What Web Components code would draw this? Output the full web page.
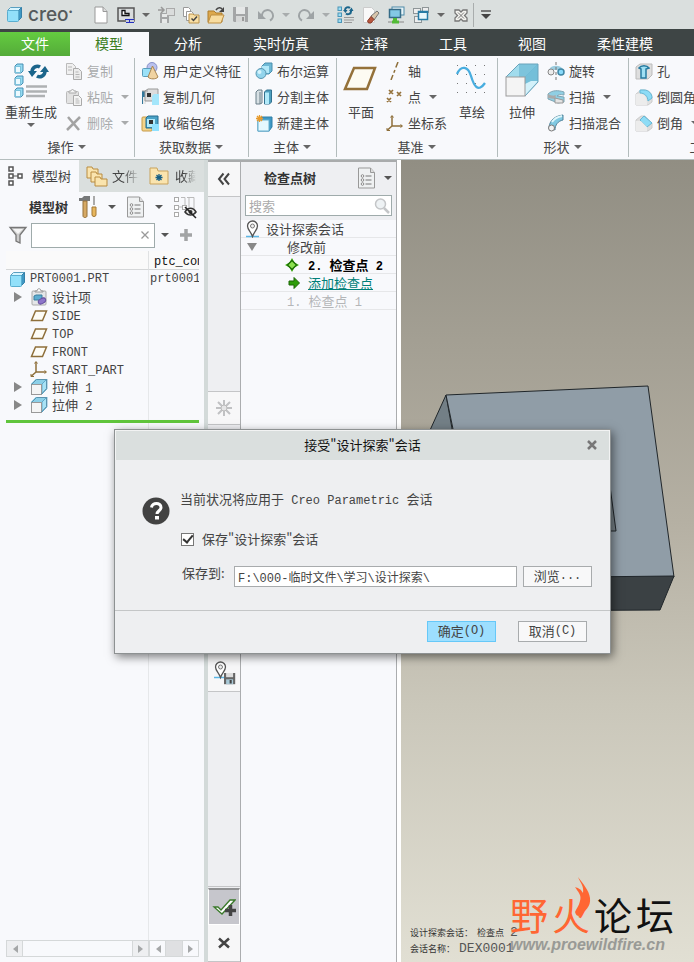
<!DOCTYPE html>
<html lang="zh-CN">
<head>
<meta charset="utf-8">
<title>Creo</title>
<style>
html, body { margin: 0; height: 100%; }
body { font: 13px/18px "Noto Sans CJK SC", sans-serif; color: #444; overflow: hidden; background: #f8f9fc; }
</style>
</head>
<body>
<creo-app></creo-app>
<script>
const CUBE = '<path d="M1.5 4.5 4.5 1.5h11l-3 3z" fill="#d8f5ff" stroke="#5a9fc0"/><path d="M12.5 4.5l3-3v10l-3 3z" fill="#3f98c4" stroke="#3580a8"/><rect x="1.500" y="4.500" width="11" height="11" rx="1" fill="#92e0fa" stroke="#5aaed0"/>';
const EXTRUDE = '<path d="M6 1h11v9l-5 6V6H1z" fill="#57aed2"/><path d="M6 1h11l-5 5H1z" fill="#8cd0e8"/><path d="M12 6l5-5v10l-5 5z" fill="#a8e2f5" stroke="#4c9abf" stroke-width=".7"/><rect x="1.500" y="6.500" width="10" height="10" fill="#f5f5f5" stroke="#999"/><path d="M1.500 6.500 6.500 1.500h10v9l-5 5.500" fill="none" stroke="#5b93ad"/>';
const PLANE = '<path d="M5.500 4h11l-4 9.500h-11z" fill="#fdfcf6" stroke="#8e6f3a" stroke-width="1.500"/>';
const AXES = '<path d="M6 2v10M6 12h10M6 12l-5 4.500" fill="none" stroke="#8e6f3a" stroke-width="1.500"/><path d="M4.500 3.500l1.500-2 1.500 2M14.500 10.500l2 1.500-2 1.500M1 14v2.500h3" fill="none" stroke="#8e6f3a"/>';
const LISTDOC = '<path d="M1.500 1h12l4 4.500V21h-16z" fill="#eff1f2" stroke="#999"/><path d="M13.500 1v4.500h4" fill="#ddd" stroke="#999"/><g fill="#fff" stroke="#888"><circle cx="5.500" cy="9" r="1.300"/><circle cx="5.500" cy="13" r="1.300"/><circle cx="5.500" cy="17" r="1.300"/></g><path d="M8.500 9h6M8.500 13h6M8.500 17h6" stroke="#777"/>';
const REGEN = '<g transform="translate(0 0) scale(.5)"><path d="M16 8a6 6 0 0 1 10-4M28 10a6 6 0 0 1-10 5" fill="none" stroke="#1b658b" stroke-width="4"/><path d="M12 8h9l-4 6zM24 10h9l-4-7z" fill="#1b658b"/></g>';
const FLOPPY = '<path d="M1 1h15v15H2l-1-1z" fill="#a4a6a7"/><path d="M4 1h9v7H4z" fill="#e5e7e7"/><path d="M4 10h9v6H4z" fill="#d6d8d8"/><path d="M10 11h2v4h-2z" fill="#999"/>';
const PIN = '<path d="M2 16.500h13" stroke="#5cb7e6" stroke-width="1.500"/><path d="M8.500 16.500C7 12 3.500 9.500 3.500 6a5 5 0 0 1 10 0c0 3.500-3.500 6-5 10.500z" fill="#fff" stroke="#555" stroke-width="1.300"/><circle cx="8.500" cy="6" r="2" fill="#eee" stroke="#777"/>';
const ICONS = {
  cube: [17, 17, CUBE],
  page: [18, 18, '<path d="M3 1h8l4 4.500V17H3z" fill="#fff" stroke="#999"/><path d="M11 1v4.500h4" fill="#ddd" stroke="#999"/>'],
  window: [18, 18, '<rect x="1" y="2" width="16" height="13" fill="#d9dcdd" stroke="#555" stroke-width="1.500"/><path d="M5 4.500v5h7v-2H8v-3z" fill="#fff" stroke="#111" stroke-width="1.300"/><path d="M9 12.500h8v4H9z" fill="#c9ccd8"/><path d="M8 13.500h9M12.500 13v4M9 16.500h8" stroke="#2430c0"/>'],
  newmodel: [18, 18, '<path d="M3 7h9v10H3z" fill="#a4a6a7"/><rect x="9.500" y="2.500" width="8" height="7" fill="#dadcdc" stroke="#aaa"/><path d="M5 8h5v3H5zM5 13h5v4H5z" fill="#e6e8e8"/><path d="M1 4h6M4 1l3 3-3 3" fill="none" stroke="#999" stroke-width="1.500"/>'],
  pages: [18, 18, '<path d="M1.500 1.500h5l2 2v7h-7z" fill="#fff" stroke="#999"/><path d="M4.500 5.500h5l2 2v7h-7z" fill="#fff" stroke="#999"/><path d="M7 8h4l1 1h5v8H7z" fill="#f8dfa6" stroke="#ba934c"/><path d="M9.500 12.500l2 2 3.500-4" fill="none" stroke="#444" stroke-width="1.500"/>'],
  open: [18, 18, '<path d="M1 5h6l2 2h6v9H1z" fill="#dda94d" stroke="#ad7c2c"/><path d="M4 9h13l-3 8H1z" fill="#f8dda0" stroke="#bd8f43"/><path d="M9 4c2-3 5-2.500 6-1" fill="none" stroke="#444" stroke-width="1.500"/><path d="M17 1v5h-5z" fill="#444"/>'],
  save: [17, 17, FLOPPY],
  undo: [18, 18, '<path d="M5 10a5.500 5.500 0 1 1 8 4.500" fill="none" stroke="#9ea3a5" stroke-width="2"/><path d="M1 5v8h8z" fill="#9ea3a5"/>'],
  redo: [18, 18, '<path d="M13 10a5.500 5.500 0 1 0-8 4.500" fill="none" stroke="#9ea3a5" stroke-width="2"/><path d="M17 5v8H9z" fill="#9ea3a5"/>'],
  regen16: [18, 18, '<g fill="#9ddcf3" stroke="#4b96b8"><rect x="1" y="1" width="3.500" height="3.500"/><rect x="1" y="7" width="3.500" height="3.500"/><rect x="1" y="13" width="3.500" height="3.500"/></g><path d="M7 11.500h10M7 14h10M7 16.500h8" stroke="#999"/>' + REGEN],
  erase: [18, 18, '<path d="M1.500 1.500h8l3 3v12h-11z" fill="#f9f9f9" stroke="#ccc"/><path d="M9 10l6-5 2 2-5 7z" fill="#d8c5ab" stroke="#777"/><path d="M9 10.500l3 3-3 3.500H6.500L5.500 15z" fill="#b9583f" stroke="#8a3b28"/>'],
  screens: [18, 18, '<rect x="5" y="1" width="12" height="8" fill="#e8f4f8" stroke="#4c8aa7"/><rect x="2.500" y="3.500" width="11" height="8" fill="#83c8e4" stroke="#356c88" stroke-width="1.500"/><path d="M8 12v3" stroke="#52bb37" stroke-width="4"/><path d="M1 16h16" stroke="#888"/><path d="M5 16h7" stroke="#52bb37" stroke-width="3"/>'],
  windows: [18, 18, '<rect x="1.500" y="2.500" width="7" height="5" fill="#eee" stroke="#8f9698"/><rect x="2.500" y="10.500" width="7" height="6" fill="#eee" stroke="#8f9698"/><rect x="10.500" y="1.500" width="6" height="5" fill="#eee" stroke="#8f9698"/><rect x="6.500" y="5.500" width="9" height="8" fill="#e9f7fc" stroke="#277ba5" stroke-width="1.500"/><path d="M6 6h10" stroke="#277ba5" stroke-width="2"/>'],
  closewin: [18, 18, '<path d="M3 4h4l2 2 2-2h4v3l-2.500 2.500L15 12v3h-4l-2-2-2 2H3v-3l2.500-2.500L3 7z" fill="#f4f4f0" stroke="#777" stroke-width="1.300"/><path d="M6 6.500l6 6M12 6.500l-6 6" stroke="#777"/>'],
  more: [12, 12, '<path d="M1 2h10" stroke="#555" stroke-width="1.500"/><path d="M1 5h10l-5 5z" fill="#444"/>'],
  caret: [10, 10, '<path d="M1 3h8L5 7z" fill="currentColor"/>'],
  regen: [36, 36, '<g fill="#94dbf2" stroke="#468fb3"><path d="M2 4l2-2h6v7l-2 2H2zM2 16l2-2h6v7l-2 2H2zM2 28l2-2h6v7l-2 2H2z"/></g><g fill="#ecfaff" stroke="#7cc2dc"><rect x="2.500" y="4.500" width="5" height="6"/><rect x="2.500" y="16.500" width="5" height="6"/><rect x="2.500" y="28.500" width="5" height="6"/></g><path d="M19 10c0-5 5-7 8-5M32 9c0 5-5 7-8 5" fill="none" stroke="#1b658b" stroke-width="3.500"/><path d="M15 9h9l-5 6zM27 10h9l-4-6z" fill="#1b658b"/><path d="M13 24.500h21M13 29.500h21M13 34h19" stroke="#aeb1b3" stroke-width="2.500"/>'],
  copy: [18, 18, '<path d="M1.500 1.500h6l3 3v8h-9z" fill="#f0f0f0" stroke="#bbb"/><path d="M8.500 6.500h5l3 3v8h-8z" fill="#ececec" stroke="#aaa"/><path d="M3 5h4M3 8h4M10.500 10h3M10.500 12.500h4M10.500 15h4" stroke="#b5b5b5"/>'],
  paste: [18, 18, '<rect x="1.500" y="3.500" width="12" height="12" rx="1" fill="#e2e2e2" stroke="#bbb"/><path d="M4 5V3h2c0-2 3-2 3 0h2v2z" fill="#f4f4f4" stroke="#aaa"/><path d="M8.500 7.500h5l3 3v7h-8z" fill="#f4f4f4" stroke="#aaa"/><path d="M10.500 11h3M10.500 13h4M10.500 15h4" stroke="#b5b5b5"/>'],
  del: [18, 18, '<path d="M3 3l11 13M15 3L2 16" stroke="#a3a3a3" stroke-width="2.500"/>'],
  udf: [18, 18, '<circle cx="11" cy="5.500" r="5" fill="#b9c1ee" stroke="#8791c8"/><rect x="1.500" y="6.500" width="10" height="8" rx="1" fill="#9be1f8" stroke="#5a9dbc"/><path d="M11.500 4L17 15c-2 2.500-8 2.500-10 0z" fill="#f0d3a2" stroke="#a98550"/>'],
  copygeo: [18, 18, '<path d="M1 3h4v13H1z" fill="#33779a"/><path d="M2 9h3v7H2z" fill="#e8e8e8"/><path d="M4 3l3-2h10v10l-3 2H4z" fill="#dcdcdc" stroke="#999"/><rect x="6" y="5" width="4" height="4" fill="#333"/><path d="M11 8l2-2h5v11h-7z" fill="#a4e6fb"/><path d="M1 3h6" stroke="#999"/>'],
  shrink: [18, 18, '<rect x="1" y="3" width="10" height="14" rx="1" fill="#f3d48b" stroke="#c69a47"/><path d="M5 4l2-2h10v10l-2 2H5z" fill="#4aa2c6" stroke="#246d90"/><rect x="6" y="5" width="8" height="8" fill="#b2eafa"/><rect x="8" y="6" width="4" height="4" fill="#333"/><path d="M11 10h7v7h-7z" fill="#8fe1ff"/>'],
  bool: [18, 18, '<path d="M7 4l3-3h7v8l-3 3H7z" fill="#6fb9d6" stroke="#4a8fae"/><rect x="7" y="4" width="7" height="7" fill="#b4e9f9"/><circle cx="6" cy="11.500" r="5" fill="#93d4ec" stroke="#5795b0"/><circle cx="4.500" cy="10" r="2" fill="#d5f3fc"/>'],
  split: [18, 18, '<path d="M1 4l2-2h4v13l-2 1H1z" fill="#d7e0e4" stroke="#6b7f89"/><path d="M5 4v12" stroke="#6b7f89"/><path d="M9.500 4l2-2h5v12l-2 2h-5z" fill="#4e9fbe" stroke="#33718f"/><path d="M10 4.500h4V16h-4z" fill="#b2eafa"/>'],
  newbody: [18, 18, '<path d="M3 6l3-3h11v10l-3 4H3z" fill="#3f98c4" stroke="#2f7ea7"/><rect x="3" y="6" width="11" height="11" fill="#e6f8fe" stroke="#69b2d0"/><path d="M4.500 1v7M1 4.500h7M2 2l5 5M7 2L2 7" stroke="#e79a2b" stroke-width="1.300"/>'],
  planeBig: [36, 36, '<path d="M11 6h21l-8 21H2z" fill="#fdfbf2" stroke="#94713a" stroke-width="2.500"/>'],
  axis: [18, 18, '<path d="M12 0L5 18" stroke="#8e6f3a" stroke-width="1.500" stroke-dasharray="6 2.500 3 2.500"/>'],
  points: [18, 18, '<path d="M3 2l4 4M7 2L3 6M11 4l4 4M15 4l-4 4M1 10l4 4M5 10l-4 4" stroke="#94713a" stroke-width="1.700"/>'],
  axes: [18, 18, AXES],
  sketch: [36, 36, '<g fill="#777"><path d="M3 3h1v1H3zM12 3h1v1h-1zM21 3h1v1h-1zM30 3h1v1h-1zM3 12h1v1H3zM12 12h1v1h-1zM21 12h1v1h-1zM30 12h1v1h-1zM3 21h1v1H3zM12 21h1v1h-1zM21 21h1v1h-1zM30 21h1v1h-1zM3 30h1v1H3zM12 30h1v1h-1zM21 30h1v1h-1zM30 30h1v1h-1z"/></g><path d="M3 12c4-9 11-8 14 2s7 17 14 7" fill="none" stroke="#48addf" stroke-width="2.300"/>'],
  extrudeBig: [36, 36, '<path d="M2 15L15 2h19v17L21 34V15z" fill="#60b3d1"/><path d="M2 15L15 2h19L21 15z" fill="#a1dced"/><path d="M15 2h19v17H15z" fill="#5aabcb" opacity=".5"/><path d="M21 15L34 2v18L21 34z" fill="#74bfd9"/><path d="M21 34V22l6-3h7z" fill="#d3f1fa"/><path d="M2 15L15 2h19v18L21 34" fill="none" stroke="#6ba3bb"/><rect x="2" y="15" width="19" height="19" fill="#f4f4f4" stroke="#9b9b9b"/>'],
  revolve: [18, 18, '<path d="M4 8c2-3 8-3 10 0" fill="none" stroke="#9ccddf" stroke-width="4"/><path d="M9 0v18" stroke="#777" stroke-dasharray="3 2"/><circle cx="4" cy="10" r="3" fill="#ececec" stroke="#888"/><circle cx="14" cy="10" r="3" fill="#89dafa" stroke="#3f87a5" stroke-width="1.500"/>'],
  sweep: [18, 18, '<path d="M1 6c4-4 10-4 16-2v3c-4-1-6 0-7 1l7 1v5l-6 1-10-4z" fill="#90cfe3" stroke="#7fa5b4"/><path d="M1 6c3 2 7 2 8 1l-1 4-7-1z" fill="#aaa"/><path d="M8 10l8 2v3H8z" fill="#e4e4e4" stroke="#999"/>'],
  blend: [18, 18, '<path d="M2 13C3 6 8 2 16 1v5c-5 1-8 5-8 10z" fill="#80c9e2" stroke="#4e829a"/><path d="M5 8c2-3 5-5 10-6" fill="none" stroke="#e0f7fc" stroke-width="2"/><circle cx="4.500" cy="14" r="3" fill="#f2f2f2" stroke="#777"/>'],
  hole: [18, 18, '<path d="M1 5l4-3h12v11l-4 4H1z" fill="#dedede" stroke="#bbb"/><path d="M4 6c2-3 8-3 10 0l-3 1v9H6V7z" fill="#9fdff3" stroke="#267ba1" stroke-width="1.500"/>'],
  round: [18, 18, '<path d="M1 6l5-4h4c5 1 7 4 7 8v4l-4 3H1z" fill="#e0e0e0" stroke="#ccc"/><path d="M5 2h4c5 0 8 4 8 8l-4 3c0-5-4-8-8-8z" fill="#8ddcf6" stroke="#65b8d6"/><path d="M1 6h5c4 0 6 4 6 11H1z" fill="#ececec"/>'],
  chamfer: [18, 18, '<path d="M1 6l5-4h4l7 7v5l-4 3H1z" fill="#ddd" stroke="#ccc"/><path d="M9 2l8 7-5 4-7-7z" fill="#8ddcf6" stroke="#65b8d6"/><path d="M1 7h5l6 6v4H1z" fill="#ececec"/>'],
  treeTab: [18, 22, '<g fill="#fff" stroke="#555" stroke-width="1.500"><rect x="2" y="2" width="4" height="4"/><rect x="2" y="9" width="4" height="4"/><rect x="2" y="16" width="4" height="4"/><rect x="11" y="9" width="4" height="4"/></g><path d="M6 11h5" stroke="#555"/>'],
  folders: [22, 22, '<g fill="#fae4ae" stroke="#b98c40"><path d="M1 2h5l1 2h5v9H1z"/><path d="M5 7h5l1 2h5v8H5z"/><path d="M9 12h5l1 2h6v7H9z"/></g>'],
  favs: [20, 20, '<path d="M1 2h7l1 3h10v13H1z" fill="#fae4ae" stroke="#c9a35c"/><path d="M10 8v7M6.500 11.500h7M7.500 9l5 5M12.500 9l-5 5" stroke="#165f85" stroke-width="1.300"/>'],
  hammer: [20, 24, '<path d="M1 6V3h3l2-2h6v5z" fill="#77797a"/><path d="M5 6h4v15c0 2-4 2-4 0z" fill="#d6a964" stroke="#94703b"/><path d="M15 1h2v9h-2z" fill="#aaa"/><path d="M14 12h4v8c0 2-4 2-4 0z" fill="#e7b65d" stroke="#a27837"/>'],
  listdoc: [19, 22, LISTDOC],
  treeHide: [24, 24, '<g fill="#fff" stroke="#aaa"><rect x="1.500" y="2.500" width="4" height="4"/><rect x="1.500" y="10.500" width="4" height="4"/><rect x="1.500" y="17.500" width="4" height="4"/><rect x="9.500" y="10.500" width="4" height="4"/></g><path d="M5 12h4M8 2.500h4v8M16 2.500v10M14 2.500h7v12" stroke="#bbb" fill="none"/><path d="M12 17c3-5 8-5 11 0-3 4-8 4-11 0z" fill="#eee" stroke="#333" stroke-width="1.500"/><circle cx="17.500" cy="17" r="2" fill="#333"/><path d="M12 12l11 11" stroke="#222" stroke-width="1.500"/>'],
  filter: [20, 20, '<path d="M2 2.500h16l-6 7.500v8l-4-2v-6z" fill="#ccc" stroke="#777" stroke-width="1.300"/><path d="M5 4h10l-5 5z" fill="#f4f4f4"/>'],
  clear: [10, 10, '<path d="M1.500 1.500l7 7M8.500 1.500l-7 7" stroke="#999" stroke-width="1.300"/>'],
  plus: [14, 14, '<path d="M7 1v12M1 7h12" stroke="#a2a4a5" stroke-width="3.500"/>'],
  tri: [10, 12, '<path d="M1 1l8 5-8 5z" fill="#888"/>'],
  triDown: [12, 10, '<path d="M1 1h10L6 9z" fill="#888"/>'],
  design: [18, 18, '<rect x="2" y="3" width="14" height="14" rx="1" fill="#e4e6e8" stroke="#aaa"/><path d="M5 4V3h2c0-3 4-3 4 0h2v1z" fill="#fff" stroke="#999"/><path d="M4 8l2-1h6v5H4z" fill="#5cacd0" stroke="#3a7e9e"/><ellipse cx="12" cy="13" rx="4" ry="2.500" transform="rotate(-30 12 13)" fill="#8d75c9" stroke="#6650a0"/>'],
  plane: [18, 17, PLANE],
  extrude: [18, 18, EXTRUDE],
  chev: [14, 14, '<path d="M6.500 1.500L2 7l4.500 5.500M12 1.500L7.500 7l4.500 5.500" fill="none" stroke="#444" stroke-width="2"/>'],
  star: [18, 18, '<path d="M9 1v16M1 9h16M3 3l12 12M15 3L3 15" stroke="#c0c1c3" stroke-width="2"/><circle cx="9" cy="9" r="3" fill="#e5e5e6" stroke="#bbb"/>'],
  pin: [18, 18, PIN],
  pinSave: [24, 24, PIN + '<g transform="translate(12 12) scale(.7)"><path d="M0 0h16v16H0z" fill="#666"/><path d="M3 0h10v6H3z" fill="#ddd"/><path d="M3 9h10v7H3z" fill="#a7c8d6"/><path d="M8 10h3v5H8z" fill="#444"/></g>'],
  accept: [24, 20, '<path d="M2 10h4l3 3 9-10h5L10 17z" fill="#fff" stroke="#3b7a2b" stroke-width="1.300"/><path d="M18.500 8v11M13 13.500h11" stroke="#444" stroke-width="3.500"/>'],
  cancel: [14, 14, '<path d="M2 2.500l10 9M12 2.500l-10 9" stroke="#444" stroke-width="2.500"/>'],
  search: [18, 18, '<circle cx="7.500" cy="7" r="5" fill="#eef2f4" stroke="#c4c6c8" stroke-width="1.500"/><path d="M11 11l5 5" stroke="#c4c6c8" stroke-width="2.500"/>'],
  diamond: [14, 14, '<path d="M7 0l2.500 4.500L14 7 9.500 9.500 7 14 4.500 9.500 0 7l4.500-2.500z" fill="#3fae12"/><path d="M7 2.500L11.500 7 7 11.500 2.500 7z" fill="#8be04f" stroke="#1c6d05" stroke-width="1.300"/>'],
  arrow: [12, 12, '<path d="M1 4h5V0.500L11.500 6 6 11.500V8H1z" fill="#2f9d0b" stroke="#1d6706"/>'],
  question: [28, 28, '<circle cx="14" cy="14" r="13.500" fill="#424242"/><path d="M9.500 10.500c.5-5.500 9.500-5.500 9.500 0 0 3-4 3.500-4 6.500" fill="none" stroke="#fff" stroke-width="3"/><path d="M13 19h4v3.500h-4z" fill="#fff"/>'],
  left: [8, 10, '<path d="M7 1v8L2 5z" fill="#a5a7a8"/>'],
  right: [8, 10, '<path d="M1 1v8l5-4z" fill="#a5a7a8"/>']
};

// Wraps runs of Latin text so that they can be set in the half-width face.
const t = s => s.replace(/[\x20-\x7e]+/g, '<span class="m">$&</span>');
const ic = n => `<creo-icon name="${n}"></creo-icon>`;
const BASE = `
  *, :host { box-sizing: border-box; }
  button, input { font: inherit; color: inherit; margin: 0; }
  button { background: none; border: 0; padding: 0; display: flex; align-items: center; justify-content: center; white-space: nowrap; }
  .m { font-family: "Liberation Mono", monospace; font-size: 12px; line-height: 1; white-space: pre; }
`;
function define(name, css, render) {
  customElements.define(name, class extends HTMLElement {
    constructor() { super(); this.attachShadow({ mode: 'open' }); }
    connectedCallback() {
      this.shadowRoot.innerHTML = `<style>${BASE}${css}</style>${render(this)}`;
    }
  });
}

define('creo-icon', ':host { display: inline-flex; flex: none; } svg { display: block; }', el => {
  const [w, h, body] = ICONS[el.getAttribute('name')];
  return `<svg width="${w}" height="${h}" viewBox="0 0 ${w} ${h}" aria-hidden="true">${body}</svg>`;
});

define('quick-bar', `
  :host { display: flex; height: 29px; background: #dadfde; align-items: center; }
  .logo { display: flex; align-items: center; gap: 5px; width: 88px; padding-left: 6px; color: #555a5c; font: 500 19px/24px "Inter", sans-serif; }
  .logo small { font-size: 8px; line-height: 16px; align-self: flex-start; margin-left: -5px; }
  button { width: 25px; height: 28px; flex: none; }
  button.c { width: 15px; color: #666; }
  button.dim { color: #a8acad; }
  .sep { width: 1px; height: 24px; background: #a9adad; }
  .sep + button { width: 23px; }
`, () => {
  const items = ['page', 'window', 'caret', 'newmodel', 'pages', 'open', 'save', 'undo', 'caret-', 'redo', 'caret-', 'regen16', 'erase', 'screens', 'windows', 'caret', 'closewin', '|', 'more'];
  return `<div class="logo">${ic('cube')}<span>creo</span><small>•</small></div>` + items.map(n =>
    n === '|' ? '<span class="sep"></span>' :
    `<button aria-label="${n}" class="${n.startsWith('caret') ? 'c' : ''} ${n.endsWith('-') ? 'dim' : ''}">${ic(n.replace('-', ''))}</button>`).join('');
});

define('ribbon-tabs', `
  :host { display: flex; height: 27px; background: #3e4545; color: #fff; font-size: 14px; line-height: 20px; overflow: hidden; }
  button { padding: 0 26px 2px 25px; height: 27px; flex: none; border-top: 3px solid #3e4545; }
  button.file { background: linear-gradient(#64cc40, #54ab39); padding: 0 21px 2px; }
  button.on { background: #f8f9fc; color: #3c7d22; }
`, () => ['文件', '模型', '分析', '实时仿真', '注释', '工具', '视图', '柔性建模'].map((s, i) =>
  `<button role="tab" class="${['file', 'on'][i] || ''}">${s}</button>`).join(''));

define('ribbon-command', `
  :host { display: block; }
  :host([disabled]) { color: #a9abac; }
  button { height: 26px; gap: 4px; padding-bottom: 1px; }
  button > span { display: flex; align-items: center; gap: 7px; }
  .caret { color: #666; }
  :host([disabled]) .caret { color: #a9abac; }
  :host([large]) button { flex-direction: column; height: 78px; justify-content: flex-start; padding-top: 4px; gap: 0; }
  :host([large]) button > span { flex-direction: column; gap: 0; line-height: 16px; margin-top: 6px; }
  :host([large]) .caret { height: 9px; display: flex; align-items: center; }
`, el => `<button>${ic(el.getAttribute('icon'))}<span><slot></slot>${el.hasAttribute('menu') ? `<span class="caret">${ic('caret')}</span>` : ''}</span></button>`);

define('ribbon-group', `
  :host { display: flex; flex-direction: column; flex: none; border-right: 1px solid #b3bcbc; margin: 2px 0; }
  .body { display: flex; height: 78px; }
  footer button { width: 100%; height: 21px; gap: 3px; }
  footer creo-icon { color: #666; }
`, el => `<div class="body"><slot></slot></div><footer><button>${el.getAttribute('label')}${ic('caret')}</button></footer>`);

define('creo-ribbon', `
  :host { display: flex; height: 104px; background: #f8f9fc; border-bottom: 1px solid #b5bebe; overflow: hidden; }
  .col { display: flex; flex-direction: column; }
  .ops { width: 135px; } .data { width: 114px; } .body { width: 88px; }
  .datum { width: 161px; } .shape { width: 131px; } .eng { width: 160px; border: 0; }
`, () => {
  const cmd = s => { const [i, l, a = ''] = s.split(' '); return `<ribbon-command icon="${i}" ${a.replace('+', ' ')}>${l}</ribbon-command>`; };
  const col = (pad, ...s) => `<div class="col" style="padding-left:${pad}px">${s.map(cmd).join('')}</div>`;
  const g = (c, l, ...b) => `<ribbon-group class="${c}" label="${l}">${b.join('')}</ribbon-group>`;
  return g('ops', '操作', col(5, 'regen 重新生成 large+menu'), col(8, 'copy 复制 disabled', 'paste 粘贴 disabled+menu', 'del 删除 disabled+menu')) +
    g('data', '获取数据', col(6, 'udf 用户定义特征', 'copygeo 复制几何', 'shrink 收缩包络')) +
    g('body', '主体', col(6, 'bool 布尔运算', 'split 分割主体', 'newbody 新建主体')) +
    g('datum', '基准', col(6, 'planeBig 平面 large'), col(7, 'axis 轴', 'points 点 menu', 'axes 坐标系'), col(7, 'sketch 草绘 large')) +
    g('shape', '形状', col(6, 'extrudeBig 拉伸 large'), col(7, 'revolve 旋转', 'sweep 扫描 menu', 'blend 扫描混合')) +
    g('eng', '工程', col(6, 'hole 孔', 'round 倒圆角 menu', 'chamfer 倒角 menu'));
});

define('model-tree', `
  :host { display: flex; flex-direction: column; width: 204px; flex: none; background: #f8f9fc; overflow: hidden; }
  .tabs { display: flex; height: 32px; background: #dadfde; flex: none; }
  .tabs button { gap: 7px; justify-content: flex-start; overflow: hidden; padding-left: 7px; }
  .tabs button:nth-child(1) { width: 79px; background: #f8f9fc; flex: none; }
  .tabs button:nth-child(2) { width: 62px; gap: 4px; }
  .tabs button:nth-child(3) { width: 56px; gap: 6px; padding-left: 8px; }
  .fade { overflow: hidden; mask-image: linear-gradient(90deg, #000 40%, transparent 95%); }
  .title { display: flex; height: 30px; align-items: center; padding-left: 29px; color: #333; }
  .title b { width: 49px; }
  .title button.c { width: 28px; color: #555; }
  .title button.l { width: 24px; }
  .find { display: flex; height: 26px; align-items: center; padding-left: 8px; }
  .box { display: flex; align-items: center; width: 124px; height: 25px; margin-left: 3px; border: 1px solid #9fabab; background: #fff; padding-right: 4px; }
  .box input { border: 0; outline: 0; flex: 1; min-width: 0; background: none; }
  .find .c { width: 20px; color: #555; } .find .p { width: 22px; }
  .grid { flex: 1; margin: 3px 5px 0 6px; background: linear-gradient(90deg, transparent 142px, #e6e8ea 142px, #e6e8ea 143px, transparent 143px); }
  table { border-collapse: separate; border-spacing: 0; table-layout: fixed; width: 100%; }
  th { height: 19px; border-bottom: 1px solid #d5d7d8; font-weight: normal; color: #111; background: #fafafa; text-align: left; padding: 0; }
  th:first-child { width: 142px; }
  th + th { padding-left: 5px; border-left: 1px solid #e0e2e3; }
  th, td { overflow: hidden; white-space: nowrap; line-height: 18px; }
  td { height: 18px; padding: 0; vertical-align: top; }
  td + td { padding-left: 2px; }
  .node { display: flex; align-items: center; height: 18px; gap: 4px; }
  .exp { width: 20px; display: flex; justify-content: center; padding-left: 4px; }
  .end { height: 3px; background: #60c53c; margin-top: 6px; }
  .bars { display: flex; height: 17px; margin: 0 5px 5px 6px; }
  .bars button { width: 15px; height: 15px; flex: none; }
  .bar { display: flex; justify-content: space-between; border: 1px solid #d5d8d9; }
  .bar i { flex: 1; border: solid #d5d8d9; border-width: 0 1px; background: #f8f9fc; }
  .bar:first-child { width: 143px; background: #eeeff1; } .bar:last-child { flex: 1; }
  .bar:last-child i { background: #dfe0e2; }
`, () => {
  const row = (icon, label, exp) => `<tr><td><div class="node"><span class="exp">${exp ? ic('tri') : ''}</span>${ic(icon)}<span>${t(label)}</span></div></td><td></td></tr>`;
  return `<div class="tabs" role="tablist"><button role="tab">${ic('treeTab')}<span>模型树</span></button><button role="tab">${ic('folders')}<span class="fade">文件夹</span></button><button role="tab">${ic('favs')}<span class="fade">收藏夹</span></button></div>
  <div class="title"><b>模型树</b><button aria-label="设置">${ic('hammer')}</button><button class="c" aria-label="菜单">${ic('caret')}</button><button aria-label="显示">${ic('listdoc')}</button><button class="c" aria-label="菜单">${ic('caret')}</button><button class="l" aria-label="隐藏">${ic('treeHide')}</button></div>
  <div class="find">${ic('filter')}<div class="box"><input type="text" aria-label="过滤"><button aria-label="清除">${ic('clear')}</button></div><button class="c" aria-label="菜单">${ic('caret')}</button><button class="p" aria-label="添加">${ic('plus')}</button></div>
  <div class="grid"><table><thead><tr><th></th><th>${t('ptc_com')}</th></tr></thead><tbody>
  <tr><td><div class="node" style="padding-left:3px">${ic('cube')}${t('PRT0001.PRT')}</div></td><td><div class="node">${t('prt0001')}</div></td></tr>
  ${row('design', '设计项', 1)}${row('plane', 'SIDE')}${row('plane', 'TOP')}${row('plane', 'FRONT')}${row('axes', 'START_PART')}${row('extrude', '拉伸 1', 1)}${row('extrude', '拉伸 2', 1)}
  </tbody></table><div class="end"></div></div>
  <div class="bars"><div class="bar"><button aria-label="左">${ic('left')}</button><i></i><button aria-label="右">${ic('right')}</button></div><div class="bar"><button aria-label="左">${ic('left')}</button><i></i><button aria-label="右">${ic('right')}</button></div></div>`;
});

define('checkpoint-panel', `
  :host { display: flex; width: 197px; flex: none; border: solid #fff; border-width: 0 4px 0 0; background: #f8f9fc; box-shadow: inset 4px 0 #d3dad9; padding-left: 4px; }
  nav { display: flex; flex-direction: column; width: 33px; border-right: 1px solid #abadaf; border-top: 2px solid #a9abac; background: #eeeff2; }
  nav button { background: #f7f7f8; width: 100%; height: 35px; border-bottom: 1px solid #c4c5c7; flex: none; }
  nav .gap { flex: 1; }
  nav .mid { height: 301px; display: flex; flex-direction: column; justify-content: space-between; border-top: 1px solid #c4c5c7; }
  nav .mid button:first-child { height: 33px; }
  nav button.on { background: #c6c6cc; border: 1px solid #fff; border-top: 2px solid #909193; height: 36px; }
  nav .ok { border-top: 1px solid #c4c5c7; padding-top: 1px; }
  nav button:last-child { height: 37px; }
  section { flex: 1; min-width: 0; border-right: 1px solid #abadaf; border-top: 2px solid #a9abac; }
  .head { background: #eeeff2; height: 58px; }
  .title { display: flex; align-items: center; height: 32px; padding-left: 23px; color: #333; }
  .title b { flex: 1; } .title .c { width: 20px; color: #555; margin-right: -2px; }
  .title button { margin-right: 2px; }
  .box { display: flex; align-items: center; margin: 1px 4px 0; height: 21px; border: 1px solid #9fabab; background: #fff; }
  input { border: 0; outline: 0; min-width: 0; flex: 1; height: 19px; padding: 0 3px 1px; background: none; }
  input::placeholder { color: #aaa; opacity: 1; }
  ul { margin: 0; padding: 0; list-style: none; }
  li { height: 18px; line-height: 17px; border-bottom: 1px solid #e6e7e9; display: flex; align-items: center; white-space: pre; }
  li:nth-child(1) { padding-left: 3px; gap: 4px; }
  li:nth-child(2) { padding-left: 5px; gap: 29px; }
  li:nth-child(3) { padding-left: 44px; gap: 9px; color: #000; }
  li:nth-child(4) { padding-left: 47px; gap: 8px; }
  li:nth-child(5) { padding-left: 46px; color: #b4b6b8; }
  a { color: #007f78; }
`, () => `<nav><button aria-label="折叠">${ic('chev')}</button><div class="gap"></div><div class="mid"><button aria-label="新建" disabled>${ic('star')}</button><button aria-label="保存会话">${ic('pinSave')}</button></div><div class="gap"></div><div class="ok"><button class="on" aria-label="接受">${ic('accept')}</button></div><button aria-label="取消">${ic('cancel')}</button></nav>
<section><div class="head"><div class="title"><b>检查点树</b><button aria-label="显示">${ic('listdoc')}</button><button class="c" aria-label="菜单">${ic('caret')}</button></div><div class="box"><input type="text" placeholder="搜索" aria-label="搜索">${ic('search')}</div></div>
<ul><li>${ic('pin')}<span>设计探索会话</span></li><li>${ic('triDown')}<span>修改前</span></li><li>${ic('diamond')}<b>${t('2. 检查点 2')}</b></li><li>${ic('arrow')}<a href="#">添加检查点</a></li><li><span>${t('1. 检查点 1')}</span></li></ul></section>`);

define('model-view', `
  :host { display: block; flex: 1; min-width: 0; position: relative; overflow: hidden; background: linear-gradient(#918e83, #b5b0a3 45%, #cac7ba 68%, #e1dfd3); }
  svg.part { position: absolute; left: 0; top: 0; }
  .info { position: absolute; left: 9px; bottom: 5px; font-size: 9px; line-height: 16px; color: #333; white-space: pre; }
  .info .m { font-size: 13px; color: #555; }
  .mark { position: absolute; left: 109px; bottom: 7px; white-space: nowrap; }
  .mark .cn { font-size: 38px; line-height: 42px; color: #111; font-weight: 400; display: flex; gap: 4px; }
  .mark .fire { color: #f63; }
  .mark .url { font: italic bold 16px/20px "Liberation Sans", sans-serif; color: #999a96; }
  .mark svg { position: absolute; left: 60px; top: -16px; }
`, () => `<svg class="part" width="300" height="500" viewBox="0 0 300 500" stroke="#20262a" stroke-width="1"><path d="M45 235L20 290v110l60 30z" fill="#737f86"/><path d="M45 235l202-9 26 191-190 3z" fill="#909da7"/><path d="M83 418l190-2-14 34-176 1z" fill="#3b4144"/><path d="M200 330h9.500l5.500 41h-15z" fill="#788389"/></svg>
<div class="info"><div>设计探索会话：  检查点   ${t('2')}</div><div>会话名称：  ${t('DEX0001')}</div></div>
<div class="mark"><svg width="24" height="44" viewBox="0 0 24 44"><path d="M8 0c3 7 6 9 5 16-2-4-5-5-8-6 3 5 7 8 5 14-1 5-4 8-5 11 1 3 2 4 4 4 6-5 12-9 11-18-1-8-7-14-12-21z" fill="#f63"/></svg><div class="cn"><span class="fire">野</span><span class="fire">火</span><span>论</span><span>坛</span></div><div class="url">www.proewildfire.cn</div></div>`);

define('explore-dialog', `
  :host { position: absolute; left: 114px; top: 429px; width: 497px; border: 1px solid #8d9192; background: #eeeff1; box-shadow: 2px 3px 9px rgba(0,0,0,.5); display: block; }
  header { display: flex; align-items: center; height: 30px; background: #dadfde; border: 1px solid #f2f3f3; border-bottom: 0; color: #111; padding-bottom: 1px; }
  h1 { flex: 1; font: inherit; margin: 0; text-align: center; padding-left: 34px; }
  header button { width: 34px; color: #777; }
  .body { display: grid; grid-template-columns: 38px 1fr; padding: 30px 18px 23px 27px; }
  .body > creo-icon { margin-top: 7px; }
  p { margin: 0 0 22px; line-height: 18px; white-space: pre; }
  .check { display: flex; align-items: center; gap: 8px; height: 18px; }
  .check input { appearance: none; width: 13px; height: 13px; border: 1px solid #777; background: #fff; display: grid; place-items: center; margin-left: 1px; }
  .check input::before { content: ""; width: 4px; height: 8px; border: solid #333; border-width: 0 2px 2px 0; transform: translateY(-1px) rotate(40deg); }
  .path { display: flex; align-items: flex-start; margin-top: 18px; gap: 6px; }
  .path label { padding-left: 2px; width: 48px; line-height: 14px; white-space: nowrap; }
  .field { flex: 1; min-width: 0; height: 21px; border: 1px solid #a8abad; background: #fff; padding: 0 3px; font: 12px/18px "Liberation Mono", "Noto Sans CJK SC", monospace; }
  .b { width: 69px; height: 21px; border: 1px solid #a8abad; background: #f8f8f9; padding-bottom: 1px; }
  footer { display: flex; justify-content: flex-end; gap: 22px; padding: 10px 23px 11px; border-top: 1px solid #c4c6c7; }
  .b.ok { background: #9ddfff; border-color: #66c8f8; }
`, () => `<header><h1>接受"设计探索"会话</h1><button aria-label="关闭"><svg width="12" height="12"><path d="M2 2l8 8M10 2l-8 8" stroke="#777" stroke-width="2.500"/></svg></button></header>
<div class="body">${ic('question')}<div><p>${t('当前状况将应用于 Creo Parametric 会话')}</p>
<label class="check"><input type="checkbox" checked><span>保存"设计探索"会话</span></label>
<div class="path"><label for="p">保存到:</label><input class="field" id="p" type="text" value="F:\\000-临时文件\\学习\\设计探索\\"><button class="b">${t('浏览...')}</button></div></div></div>
<footer><button class="b ok">${t('确定(O)')}</button><button class="b">${t('取消(C)')}</button></footer>`);

define('creo-app', `
  :host { display: flex; flex-direction: column; height: 100vh; position: relative; overflow: hidden; }
  main { display: flex; flex: 1; min-height: 0; }
`, () => `<quick-bar></quick-bar><ribbon-tabs></ribbon-tabs><creo-ribbon></creo-ribbon><main><model-tree></model-tree><checkpoint-panel></checkpoint-panel><model-view></model-view></main><explore-dialog role="dialog"></explore-dialog>`);
</script>
</body>
</html>
